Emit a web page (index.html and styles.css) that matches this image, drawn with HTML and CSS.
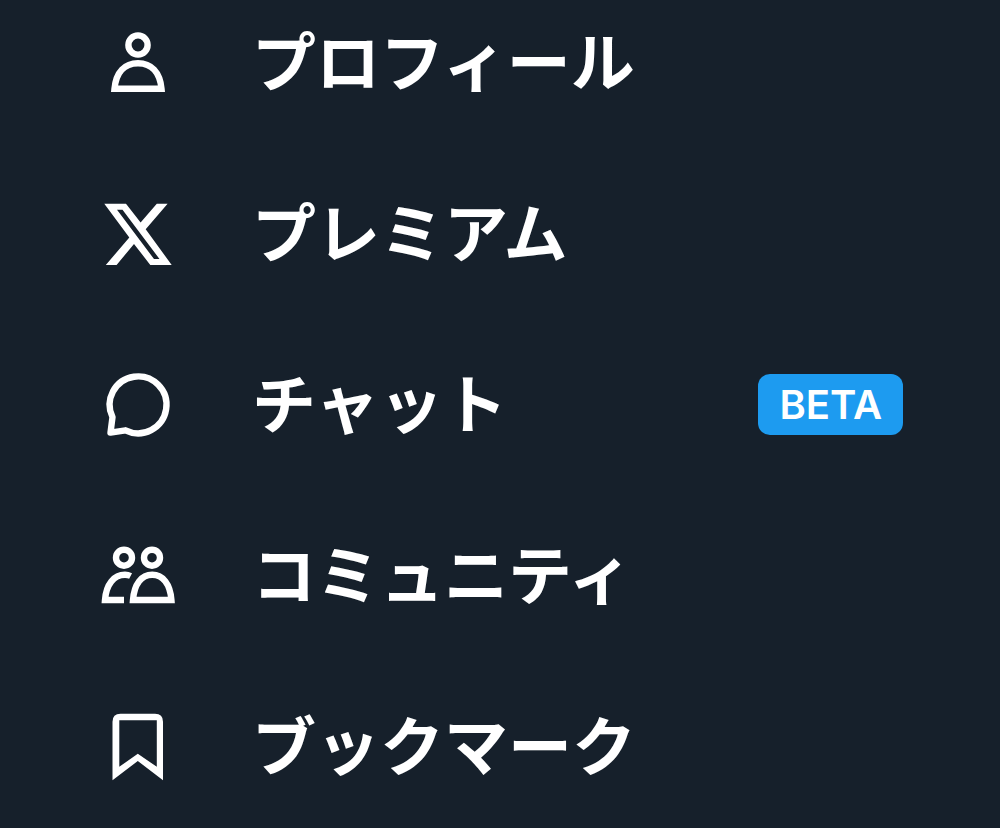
FILE: index.html
```html
<!DOCTYPE html>
<html lang="ja">
<head>
<meta charset="utf-8">
<meta name="viewport" content="width=device-width, initial-scale=1">
<title>メニュー</title>
<link rel="stylesheet" href="styles.css">
</head>
<body>
<nav class="menu" aria-label="メニュー">
  <a class="item" href="#profile">
    <svg class="icon" viewBox="0 0 80 80" aria-hidden="true">
      <circle class="line" cx="40" cy="23" r="9.6"/>
      <path class="line" d="M16.5 66.8C18 50 27 41.2 40 41.2S62 50 63.5 66.8Z"/>
    </svg>
    <span class="label">プロフィール</span>
  </a>
  <a class="item" href="#premium">
    <svg class="icon" viewBox="0 0 80 80" aria-hidden="true">
      <path class="solid" d="M6.3 10.7H28L42.6 29.6 58.8 10.7H69.6L47.7 36.2 73.7 72H52.3L36 50.9 18.6 72H7.8L31.3 44.5ZM19 16.7L56 66H61.5L24.5 16.7Z"/>
    </svg>
    <span class="label">プレミアム</span>
  </a>
  <a class="item" href="#chat">
    <svg class="icon" viewBox="0 0 80 80" aria-hidden="true">
      <path class="line rounded" d="M14.5 53.2L12.5 68.6 27.5 66.3A28.4 28.4 0 1 0 14.5 53.2Z"/>
    </svg>
    <span class="label">チャット</span>
    <span class="badge">BETA</span>
  </a>
  <a class="item" href="#communities">
    <svg class="icon" viewBox="0 0 80 80" aria-hidden="true">
      <circle class="line" cx="26" cy="22.7" r="8"/>
      <circle class="line" cx="54" cy="22.7" r="8"/>
      <path class="line" d="M26 65H7C8.2 49 16 39.8 27 39.8c2.2 0 4 .4 5.6 1.2"/>
      <path class="line" d="M35 65C36.2 49 43.5 39.8 54.2 39.8S72.2 49 73.4 65Z"/>
    </svg>
    <span class="label">コミュニティ</span>
  </a>
  <a class="item" href="#bookmarks">
    <svg class="icon" viewBox="0 0 80 80" aria-hidden="true">
      <path class="solid" d="M14.5 74.3V15.7Q14.5 7.7 22.5 7.7H57Q65 7.7 65 15.7V74.3L39.8 55ZM21.3 60.8L39.8 47.7 58.8 60.8V14.3H21.3Z"/>
    </svg>
    <span class="label">ブックマーク</span>
  </a>
</nav>
</body>
</html>
```
FILE: styles.css
```css
body {
  margin: 0;
  background: #16202b;
  color: #fff;
  font-family: "Noto Sans CJK JP", sans-serif;
}

.menu {
  display: flex;
  flex-direction: column;
  gap: 47px;
  padding: 0 97px 20px 98px;
}

.item {
  display: flex;
  align-items: center;
  min-height: 124px;
  color: inherit;
  text-decoration: none;
}

.icon {
  flex: none;
  width: 80px;
  height: 80px;
  margin-right: 74px;
}

.line {
  fill: none;
  stroke: currentColor;
  stroke-width: 6.4;
  stroke-linejoin: miter;
}

.rounded {
  stroke-linejoin: round;
}

.solid {
  fill: currentColor;
  fill-rule: evenodd;
}

.label {
  padding-bottom: 8px;
  font-size: 64px;
  font-weight: 700;
  line-height: 96px;
  white-space: nowrap;
}

.badge {
  margin-left: auto;
  padding: 6px 21px;
  border-radius: 12px;
  background: #1d9bf0;
  font-family: Inter, sans-serif;
  font-size: 40px;
  font-weight: 600;
  line-height: 49px;
}
```
